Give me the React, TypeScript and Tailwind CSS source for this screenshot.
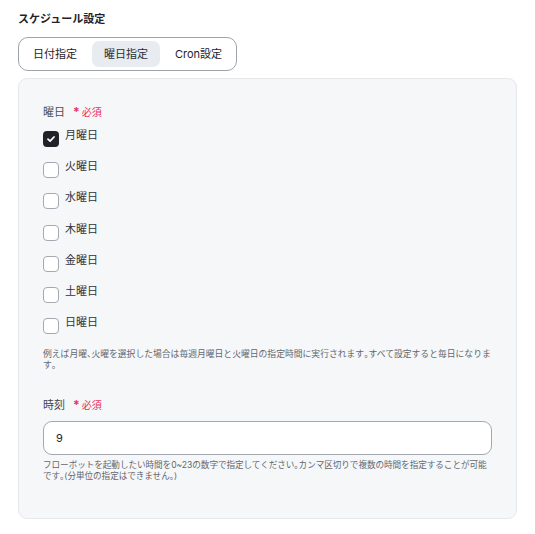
import React from "react";

const days = ["月曜日", "火曜日", "水曜日", "木曜日", "金曜日", "土曜日", "日曜日"];

function Required() {
  return (
    <span className="ml-[8px] inline-flex items-center text-[10px] text-[#e8305f]">
      <span className="mr-[2px] text-[12px] leading-none font-bold">*</span>必須
    </span>
  );
}

function P({ children }: { children: React.ReactNode }) {
  return <span className="[font-feature-settings:'halt']">{children}</span>;
}

export default function App() {
  return (
    <div
      className="w-[535px] h-[534px] bg-white px-[18px] pt-[11px]"
      style={{ fontFamily: '"Inter", "Noto Sans CJK JP", sans-serif' }}
    >
      <div className="text-[11px] leading-[16px] font-semibold text-[#1f2329]">スケジュール設定</div>
      <div className="mt-[10px] inline-flex items-center gap-[4px] rounded-[10px] border border-[#9ea3ab] p-[3px] h-[34px]">
        <div className="h-[26px] px-[11px] flex items-center text-[11px] text-[#1f2329]">日付指定</div>
        <div className="h-[26px] px-[12px] flex items-center rounded-[7px] bg-[#e8ebef] text-[11px] text-[#2a2f36]">曜日指定</div>
        <div className="h-[26px] px-[11px] flex items-center text-[11px] text-[#1f2329]">Cron設定</div>
      </div>
      <div className="mt-[7px] w-[499px] rounded-[9px] border border-[#e6e8ec] bg-[#f6f7f9] px-[24px] pt-[25px] pb-[36px]">
        <div className="flex items-center text-[11px] leading-[16px] text-[#4b5058]">
          曜日
          <Required />
        </div>
        <div className="mt-[11px] flex flex-col gap-[15.2px]">
          {days.map((d, i) => (
            <div key={d} className="flex items-start gap-[6px]">
              {i === 0 ? (
                <div className="w-[16px] h-[16px] rounded-[4px] bg-[#1f2329] flex items-center justify-center">
                  <svg width="10" height="10" viewBox="0 0 10 10">
                    <path d="M2 5.2 L4.1 7.2 L8 3" stroke="white" strokeWidth="1.8" fill="none" strokeLinecap="round" strokeLinejoin="round" />
                  </svg>
                </div>
              ) : (
                <div className="w-[16px] h-[16px] rounded-[4px] border border-[#a4a9b1] bg-white" />
              )}
              <span className="-mt-[2px] text-[11px] leading-[13px] text-[#2f343b]">{d}</span>
            </div>
          ))}
        </div>
        <p className="mt-[14px] text-[8.8px] leading-[11px] text-[#62676e]">
          例えば月曜<P>、</P>火曜を選択した場合は毎週月曜日と火曜日の指定時間に実行されます<P>。</P>すべて設定すると毎日になります<P>。</P>
        </p>
        <div className="mt-[27px] flex items-center text-[11px] leading-[16px] text-[#3e434a]">
          時刻
          <Required />
        </div>
        <div className="mt-[8px] h-[34px] w-full rounded-[9px] border border-[#a4a9b1] bg-white px-[12px] flex items-center text-[11px] text-[#1f2329]">
          9
        </div>
        <p className="mt-[5px] text-[8.6px] leading-[11px] tracking-[-0.05px] text-[#62676e]">
          フローボットを起動したい時間を0~23の数字で指定してください<P>。</P>カンマ区切りで複数の時間を指定することが可能です<P>。(</P>分単位の指定はできません<P>。)</P>
        </p>
      </div>
    </div>
  );
}
